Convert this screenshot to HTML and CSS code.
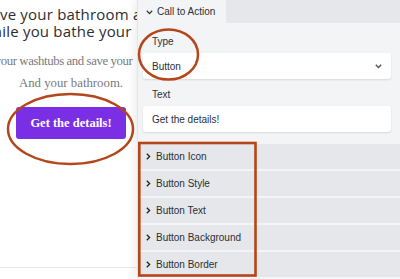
FILE: index.html
```html
<!DOCTYPE html>
<html lang="en">
<head>
<meta charset="utf-8">
<title>Call to Action editor</title>
<link rel="stylesheet" href="styles.css">
</head>
<body>
<div class="app">
  <main class="site">
    <div class="hero">
      <h1 class="headline">
        <span class="line l1">Save your bathroom and</span>
        <span class="line l2">while you bathe your</span>
      </h1>
      <p class="sub">
        <span class="line s1">Scrub your washtubs and save your</span>
        <span class="line s2">And your bathroom.</span>
      </p>
      <a class="cta" href="#">Get the details!</a>
    </div>
    <div class="rule"></div>
  </main>
  <aside class="panel">
    <div class="tabbar">
      <div class="tab">
        <svg class="chev-down" width="7" height="5" viewBox="0 0 7 5"><path d="M0.8 0.8 L3.5 3.6 L6.2 0.8" fill="none" stroke="#333" stroke-width="1.3"/></svg>
        <span>Call to Action</span>
      </div>
    </div>
    <div class="body">
      <label class="label">Type</label>
      <div class="field select">
        <span>Button</span>
        <svg width="7" height="5" viewBox="0 0 7 5"><path d="M0.8 0.8 L3.5 3.6 L6.2 0.8" fill="none" stroke="#555" stroke-width="1.4"/></svg>
      </div>
      <label class="label">Text</label>
      <div class="field">Get the details!</div>
    </div>
    <ul class="sections">
      <li class="row"><svg width="5" height="7" viewBox="0 0 5 7"><path d="M0.8 0.8 L3.6 3.5 L0.8 6.2" fill="none" stroke="#222" stroke-width="1.3"/></svg>Button Icon</li>
      <li class="row"><svg width="5" height="7" viewBox="0 0 5 7"><path d="M0.8 0.8 L3.6 3.5 L0.8 6.2" fill="none" stroke="#222" stroke-width="1.3"/></svg>Button Style</li>
      <li class="row"><svg width="5" height="7" viewBox="0 0 5 7"><path d="M0.8 0.8 L3.6 3.5 L0.8 6.2" fill="none" stroke="#222" stroke-width="1.3"/></svg>Button Text</li>
      <li class="row"><svg width="5" height="7" viewBox="0 0 5 7"><path d="M0.8 0.8 L3.6 3.5 L0.8 6.2" fill="none" stroke="#222" stroke-width="1.3"/></svg>Button Background</li>
      <li class="row"><svg width="5" height="7" viewBox="0 0 5 7"><path d="M0.8 0.8 L3.6 3.5 L0.8 6.2" fill="none" stroke="#222" stroke-width="1.3"/></svg>Button Border</li>
    </ul>
  </aside>
</div>
<svg class="annotations" width="400" height="279" viewBox="0 0 400 279">
  <ellipse cx="70.5" cy="129" rx="62.5" ry="35" fill="none" stroke="#b5461b" stroke-width="2.5"/>
  <ellipse cx="168.5" cy="54.5" rx="29.5" ry="25" fill="none" stroke="#b5461b" stroke-width="2.5"/>
  <rect x="139.3" y="143" width="116.2" height="132.5" fill="none" stroke="#b5461b" stroke-width="2.6"/>
</svg>
</body>
</html>
```
FILE: styles.css
```css
* { box-sizing: border-box; }
html, body { margin: 0; padding: 0; }
body {
  width: 400px;
  height: 279px;
  overflow: hidden;
  background: #fff;
  position: relative;
  font-family: "Liberation Sans", Arial, sans-serif;
}
.app {
  display: flex;
  height: 279px;
}
.site {
  width: 137px;
  flex: none;
  overflow: hidden;
  display: flex;
  flex-direction: column;
  background: #fff;
}
.hero {
  flex: 1;
  padding-top: 6px;
}
.line {
  display: block;
  white-space: nowrap;
}
.headline {
  margin: 0;
  font-family: "Open Sans", "Noto Sans", sans-serif;
  font-weight: 400;
  font-size: 15px;
  line-height: 17px;
  color: #2e2e2e;
  letter-spacing: 0.2px;
}
.l1 { margin-left: -17px; }
.l2 { margin-left: -19px; }
.sub {
  margin: 10px 0 0;
  font-family: "Liberation Serif", serif;
  font-size: 12.8px;
  line-height: 22px;
  color: #7a7a7a;
}
.s1 { margin-left: -36px; letter-spacing: -0.4px; }
.s2 { text-align: center; padding-left: 5px; }
.cta {
  display: flex;
  align-items: center;
  justify-content: center;
  margin: 13px 0 0 16px;
  width: 110px;
  height: 32px;
  border-radius: 3px;
  background: #7b2fe5;
  color: #fff;
  text-decoration: none;
  font-family: "Liberation Serif", serif;
  font-weight: 700;
  font-size: 12.5px;
}
.rule {
  height: 1px;
  background: #e6e6e6;
  margin-bottom: 11px;
}
.panel {
  flex: 1;
  background: #f3f4f6;
  box-shadow: -3px 0 8px rgba(0, 0, 0, 0.07);
  border-left: 1px solid #e2e4e8;
  display: flex;
  flex-direction: column;
  font-size: 10px;
  color: #2b2f36;
  position: relative;
}
.tabbar {
  height: 23px;
  background: #e5e7eb;
  display: flex;
}
.tab {
  width: 88px;
  background: #f3f4f6;
  display: flex;
  align-items: center;
  padding-left: 8px;
  gap: 4px;
}
.chev-down { margin-top: 1px; }
.body {
  padding: 12px 9px 0 5px;
  display: flex;
  flex-direction: column;
}
.label {
  display: block;
  padding-left: 9px;
  height: 14px;
  line-height: 14px;
  margin-bottom: 4px;
}
.field {
  height: 26px;
  background: #fff;
  border-radius: 3px;
  box-shadow: 0 1px 2px rgba(0, 0, 0, 0.12);
  display: flex;
  align-items: center;
  padding: 0 9px;
  margin-bottom: 9px;
}
.select { justify-content: space-between; }
.sections {
  list-style: none;
  margin: 3px 0 0;
  padding: 0;
  display: flex;
  flex-direction: column;
  gap: 2px;
}
.row {
  height: 25px;
  background: #e5e7eb;
  display: flex;
  align-items: center;
  padding-left: 8px;
  gap: 5px;
}
.annotations {
  position: absolute;
  left: 0;
  top: 0;
  pointer-events: none;
}
```
